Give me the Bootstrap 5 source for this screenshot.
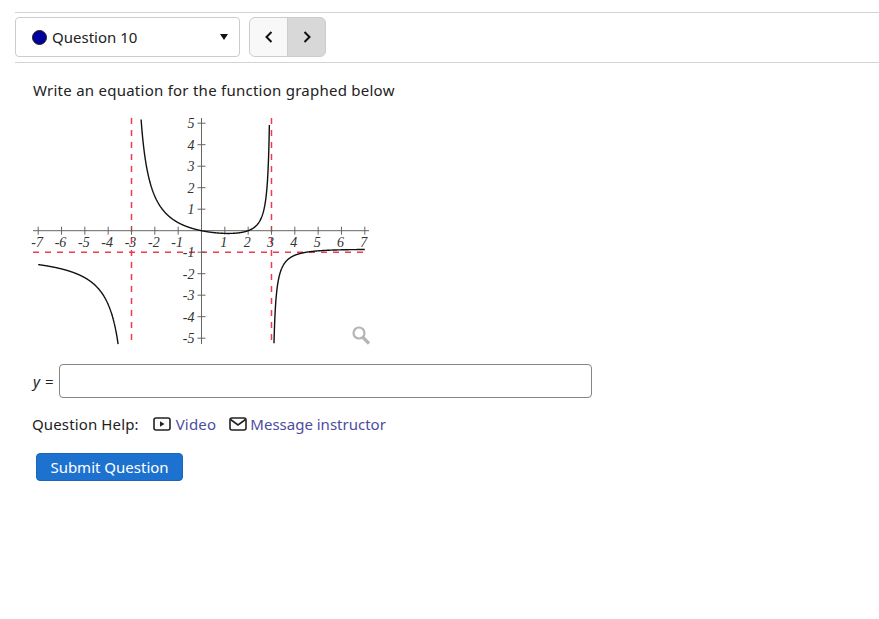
<!DOCTYPE html>
<html lang="en">
<head>
<meta charset="utf-8">
<title>Question 10</title>
<link rel="stylesheet" href="https://cdn.jsdelivr.net/npm/bootstrap@5.3.0/dist/css/bootstrap.min.css">
<style>
html,body{background:#fff;overflow:hidden}
body{font-family:"Noto Sans",sans-serif;font-size:15px;color:#222;line-height:1.4}
.shell{padding:12px 0 0 15px}
.toolbar{border-top:1px solid #d3d3d3;border-bottom:1px solid #d3d3d3;height:51px;padding-top:4px;gap:9px}
.qpick{width:225px;height:40px;border:1px solid #ccc;border-radius:4px;background:#fff;padding:0 11px 0 16px;color:#222;font-size:15px}
.qdot{width:15px;height:15px;border-radius:50%;background:#00009c;border:1px solid #222;margin-right:5px}
.qcaret{width:0;height:0;border-left:4.5px solid transparent;border-right:4.5px solid transparent;border-top:6px solid #111}
.qnav{height:40px}
.qnav .btn{width:39px;height:40px;padding:0;border:1px solid #ccc;--bs-btn-bg:#f8f8f8;display:flex;align-items:center;justify-content:center}
.qnav .btn.qnext{background:#d8d8d8;border-color:#ccc}
.qbody{padding:0 0 0 18px}
.qtext{margin:16px 0 0;line-height:22px;font-size:15px;letter-spacing:.25px}
.plot{display:block;margin:17px 0 0;width:340px;height:230px;overflow:visible}
.plot text{font-family:"Liberation Serif",serif;font-style:italic;font-size:14px;fill:#333}
.ansrow{margin-top:16px;gap:4px}
.ansrow span{width:22px;letter-spacing:.6px}
.ansrow i{font-family:"Noto Sans",sans-serif;font-size:15px}
.ansbox{width:533px;height:34px;border:1px solid #858585;border-radius:4px;padding:0 8px;box-shadow:none}
.helprow{margin:14px 0 0 -1px;height:24px}
.helprow .hlabel{margin-right:14px;letter-spacing:.13px}
.helprow a{color:#4c4c9e;text-decoration:none;display:inline-flex;align-items:center}
.helprow a.vidlink{margin-right:13px;letter-spacing:.2px}
.helprow svg{margin-right:5px}
.helprow a.msglink svg{margin-right:3px}
.sendbtn{margin:17px 0 0 3px;width:147px;height:28px;padding:0;font-size:15px;line-height:26px;background:#1d72d0;border:1px solid #1a66bb;border-radius:4px}
</style>
</head>
<body>
<div class="shell">
  <div class="toolbar d-flex align-items-start">
    <button type="button" class="qpick d-flex align-items-center justify-content-between">
      <span class="d-flex align-items-center"><span class="qdot"></span>Question 10</span>
      <span class="qcaret"></span>
    </button>
    <div class="btn-group qnav">
      <button type="button" class="btn btn-light" aria-label="Previous"><svg width="10" height="14" viewBox="0 0 10 14"><path d="M7.500 2 2.500 7l5 5" fill="none" stroke="#111" stroke-width="2"/></svg></button>
      <button type="button" class="btn btn-light qnext" aria-label="Next"><svg width="10" height="14" viewBox="0 0 10 14"><path d="M2.500 2l5 5-5 5" fill="none" stroke="#111" stroke-width="2"/></svg></button>
    </div>
  </div>
  <div class="qbody">
    <p class="qtext">Write an equation for the function graphed below</p>
    <svg class="plot" id="plot" viewBox="33 118 340 230" role="img" aria-label="Graph"></svg>
    <div class="ansrow d-flex align-items-center">
      <span><i>y</i> =</span>
      <input type="text" class="form-control ansbox" aria-label="y">
    </div>
    <div class="helprow d-flex align-items-center">
      <span class="hlabel">Question Help:</span>
      <a href="#" class="vidlink"><svg width="18" height="14" viewBox="0 0 18 14"><rect x="1" y="1" width="16" height="12" rx="2" fill="none" stroke="#222" stroke-width="1.600"/><path d="M7 4.300v5.400L11.500 7z" fill="#222"/></svg>Video</a>
      <a href="#" class="msglink"><svg width="18" height="14" viewBox="0 0 18 14"><rect x="1" y="1" width="16" height="12" rx="2" fill="none" stroke="#222" stroke-width="1.600"/><path d="M1.500 2.500 9 8l7.500-5.500" fill="none" stroke="#222" stroke-width="1.600"/></svg>Message instructor</a>
    </div>
    <button type="button" class="btn btn-primary sendbtn d-block">Submit Question</button>
  </div>
</div>
<script src="https://cdn.jsdelivr.net/npm/bootstrap@5.3.0/dist/js/bootstrap.bundle.min.js"></script>
<script>
(function(){
  var X=function(x){return 201.5+23.33*x},Y=function(y){return 230.7+21.5*(-y)};
  var f=function(x){return -x*(x-2)/((x-3)*(x+3))};
  var s='';
  var dash='stroke="#ec3c50" stroke-width="1.500" stroke-dasharray="6 6"';
  s+='<line x1="33" y1="'+Y(-1)+'" x2="366" y2="'+Y(-1)+'" '+dash+'/>';
  s+='<line x1="'+X(-3)+'" y1="118" x2="'+X(-3)+'" y2="340" '+dash+'/>';
  s+='<line x1="'+X(3)+'" y1="118" x2="'+X(3)+'" y2="344" '+dash+'/>';
  s+='<line x1="33" y1="'+Y(0)+'" x2="369" y2="'+Y(0)+'" stroke="#666"/>';
  s+='<line x1="'+X(0)+'" y1="118" x2="'+X(0)+'" y2="344" stroke="#666"/>';
  for(var i=-7;i<=7;i++){ if(!i)continue;
    s+='<line x1="'+X(i)+'" y1="'+(Y(0)-4)+'" x2="'+X(i)+'" y2="'+(Y(0)+4)+'" stroke="#666"/>';
    s+='<text x="'+(X(i)-1)+'" y="247" text-anchor="middle">'+i+'</text>';
  }
  for(var j=-5;j<=5;j++){ if(!j)continue;
    s+='<line x1="'+(X(0)-4)+'" y1="'+Y(j)+'" x2="'+(X(0)+4)+'" y2="'+Y(j)+'" stroke="#666"/>';
    s+='<text x="'+(X(0)-7)+'" y="'+(Y(j)+5)+'" text-anchor="end">'+j+'</text>';
  }
  var seg=function(a,b){var d='',n=1200,first=true;
    for(var k=0;k<=n;k++){var x=a+(b-a)*k/n,y=f(x);
      if(y>5.2||y<-5.3)continue;
      d+=(first?'M':'L')+X(x).toFixed(2)+' '+Y(y).toFixed(2);first=false;}
    return '<path d="'+d+'" fill="none" stroke="#111" stroke-width="1.400"/>';};
  s+=seg(-7,-3.001)+seg(-2.999,2.999)+seg(3.001,7);
  s+='<g fill="none" stroke="#b5b5b5"><circle cx="359" cy="333" r="5.500" stroke-width="2.200"/><path d="M363 337.500 369 343.500" stroke-width="3.200"/></g>';
  document.getElementById('plot').innerHTML=s;
})();
</script>
</body>
</html>
